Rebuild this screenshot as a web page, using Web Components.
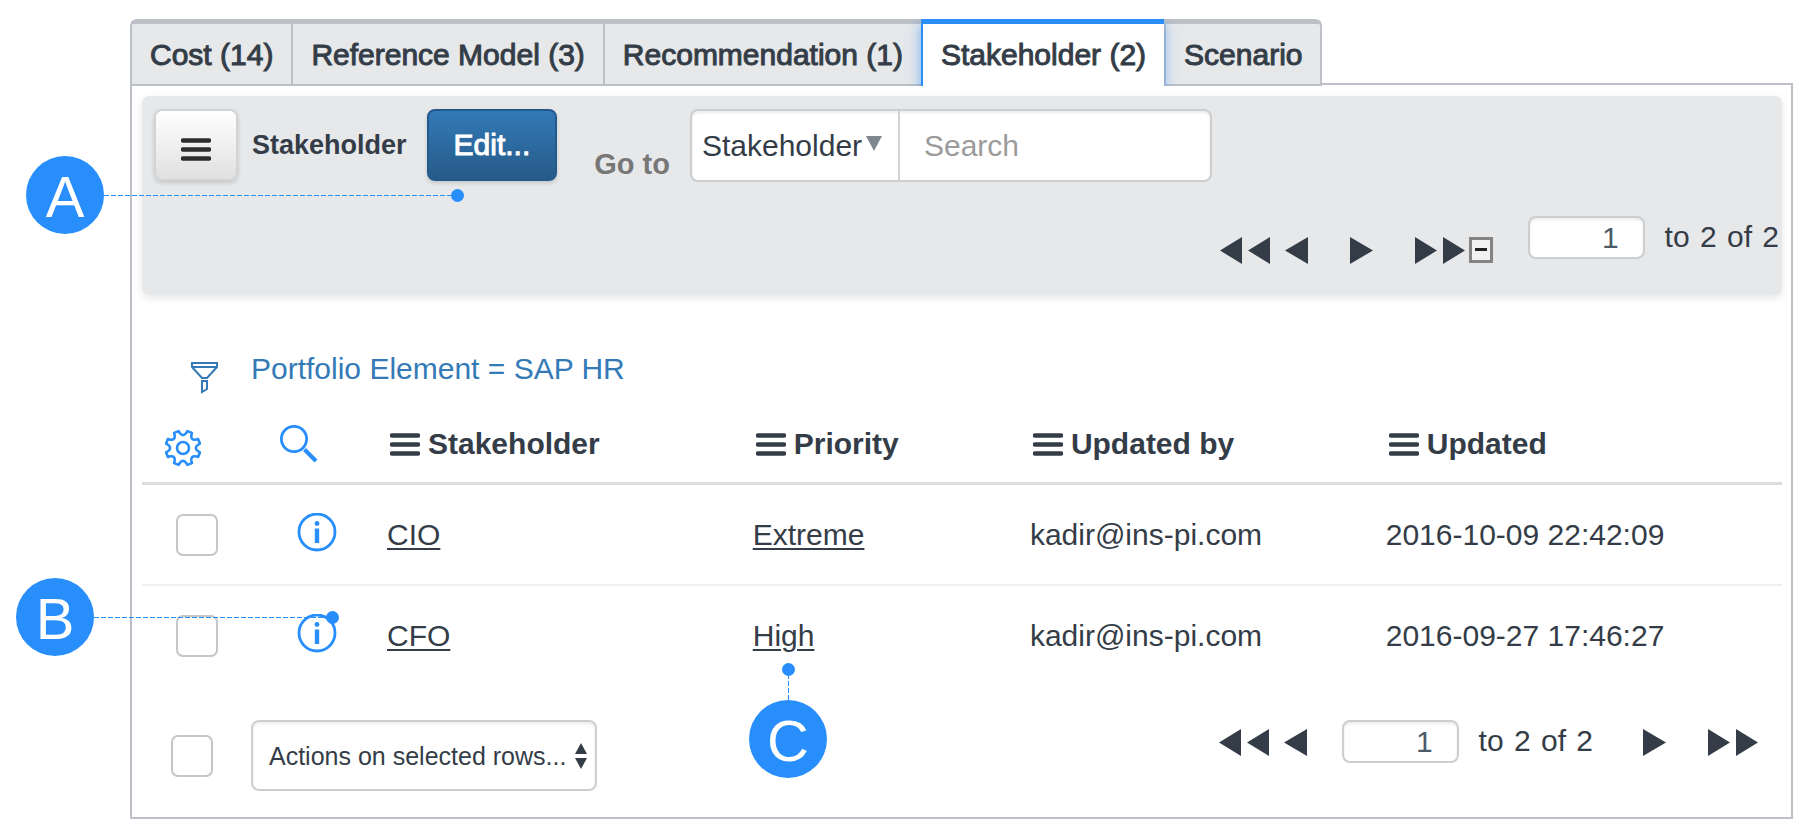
<!DOCTYPE html>
<html lang="en">
<head>
<meta charset="utf-8">
<title>Stakeholder</title>
<style>
  body {
    margin: 0;
    background: #fff;
    color: #343d47;
    font: 30px/36px "Liberation Sans", Arial, sans-serif;
    --accent: #278efc;
    --link: #337ab7;
    --line: #bdc0c6;
    --grey: #e6e8ea;
  }
</style>
</head>
<body>
<portfolio-page></portfolio-page>

<script>
const define = (name, html, setup = () => {}) => {
  const template = document.createElement('template');
  template.innerHTML = html;
  customElements.define(name, class extends HTMLElement {
    constructor() {
      super();
      this.attachShadow({ mode: 'open' });
      this.shadowRoot.append(template.content.cloneNode(true));
    }

    connectedCallback() {
      setup(this, this.shadowRoot);
    }
  });
};

const columns = ['Stakeholder', 'Priority', 'Updated by', 'Updated'];
const records = [
  ['CIO', 'Extreme', 'kadir@ins-pi.com', '2016-10-09 22:42:09'],
  ['CFO', 'High', 'kadir@ins-pi.com', '2016-09-27 17:46:27'],
];

// outline with eight teeth, joined by curved valleys
const gear = (c, tip, root) => {
  const at = (deg, r) => {
    const a = deg * Math.PI / 180;
    return `${(c + r * Math.cos(a)).toFixed(1)} ${(c + r * Math.sin(a)).toFixed(1)}`;
  };
  let d = '';
  for (let i = 0; i < 8; i++) {
    const mid = i * 45 + 22.5;
    d += `${i ? 'L' : 'M'}${at(mid - 8, tip)}L${at(mid + 8, tip)}L${at(mid + 11, root + 2)}`;
    d += `Q${at(mid + 22.5, root - 2)} ${at(mid + 34, root + 2)}`;
  }
  return `${d}Z`;
};

const shapes = {
  bars: [30, 23, '<path d="M2 2.5h26M2 11.5h26M2 20.5h26" stroke="currentColor" stroke-width="4.6" stroke-linecap="round"/>'],
  gear: [38, 38, `<g fill="none" stroke="currentColor" stroke-width="2.6" stroke-linejoin="round"><path d="${gear(19, 17.5, 13)}"/><circle cx="19" cy="19" r="6"/></g>`],
  search: [38, 40, '<g fill="none" stroke="currentColor"><circle cx="14" cy="16" r="12.6" stroke-width="2.8"/><path d="M24.5 26.5L36 38" stroke-width="4"/></g>'],
  info: [40, 40, '<circle cx="20" cy="19" r="18" fill="none" stroke="currentColor" stroke-width="2.8"/><circle cx="20" cy="10.5" r="2.4" fill="currentColor"/><path d="M20 15.500v14.500" stroke="currentColor" stroke-width="4.4"/>'],
  funnel: [27, 32, '<g fill="none" stroke="currentColor" stroke-width="2"><path d="M1 1h25v4L16 16h-5L1 5zM1 5h25"/><path d="M11 19h5v8l-5 3z"/></g>'],
  single: [23, 27, '<path d="M0 13.5L23 0v27z" fill="currentColor"/>'],
  double: [50, 27, '<path d="M0 13.5L22 0v27zM28 13.5L50 0v27z" fill="currentColor"/>'],
  collapse: [24, 26, '<rect x="1.500" y="1.500" width="21" height="23" fill="#f2f2f2" stroke="#848484" stroke-width="3"/><path d="M6 12.500h12" stroke="#222" stroke-width="3"/>'],
  updown: [12, 26, '<path d="M6 0l6 11H0zM6 26L0 15h12z" fill="currentColor"/>'],
};

define('ui-icon', `
<style>
  :host { display: inline-block; }
  :host([flip]) { transform: rotate(180deg); }
  svg { display: block; }
</style>
`, (host, root) => {
  const [width, height, body] = shapes[host.getAttribute('name')];
  root.innerHTML += `<svg width="${width}" height="${height}" viewBox="0 0 ${width} ${height}" aria-hidden="true">${body}</svg>`;
});

define('icon-button', `
<style>
  :host { display: block; flex: none; }
  button {
    display: block;
    padding: 0;
    border: 0;
    background: none;
    color: inherit;
    cursor: pointer;
  }
</style>
<button type="button"><slot></slot></button>
`, (host, root) => {
  root.querySelector('button').setAttribute('aria-label', host.getAttribute('label'));
});

define('push-button', `
<style>
  :host { display: block; flex: none; }
  button {
    display: flex;
    align-items: center;
    justify-content: center;
    box-sizing: border-box;
    height: 72px;
    padding: 0 25px;
    border: 2px solid #d2d3d4;
    border-radius: 8px;
    background: linear-gradient(#fff, #e0e0e0);
    box-shadow: 0 2px 4px rgba(0, 0, 0, .15);
    color: #2d2d2d;
    font: inherit;
  }
  ::slotted(ui-icon) { padding-top: 8px; }
  :host([primary]) button {
    border-color: #245a8b;
    background: linear-gradient(#337ab7, #265a88);
    color: #fff;
    -webkit-text-stroke: 1px #fff;
  }
</style>
<button type="button"><slot></slot></button>
`, (host, root) => {
  if (host.hasAttribute('label')) {
    root.querySelector('button').setAttribute('aria-label', host.getAttribute('label'));
  }
});

define('tick-box', `
<style>
  :host { display: block; flex: none; }
  input {
    display: block;
    appearance: none;
    box-sizing: border-box;
    width: 42px;
    height: 42px;
    margin: 0;
    border: 2px solid #c4c6ca;
    border-radius: 7px;
    background: #fff;
  }
  input:checked { background: var(--accent); }
</style>
<input type="checkbox">
`, (host, root) => {
  root.querySelector('input').setAttribute('aria-label', host.getAttribute('label'));
});

define('row-range', `
<style>
  :host { display: flex; gap: 20px; line-height: 42px; white-space: nowrap; }
  input {
    box-sizing: border-box;
    width: 117px;
    height: 43px;
    padding: 0 24px;
    border: 2px solid #ccced0;
    border-radius: 8px;
    background: #fff;
    box-shadow: inset 0 2px 3px rgba(0, 0, 0, .08);
    color: #4d5b69;
    font: inherit;
    text-align: right;
  }
  span { margin: 0 2px; }
  span:last-child { margin-right: 0; }
</style>
<input type="text" value="1" aria-label="First row">
<div>to <span>2</span> of <span>2</span></div>
`);

define('tab-strip', `
<style>
  :host {
    display: flex;
    position: relative;
    overflow: hidden;
    width: fit-content;
    border-radius: 6px 6px 0 0;
  }
  ::slotted(a) {
    box-sizing: border-box;
    height: 67px;
    padding: 13px 18px 0;
    border: solid var(--line);
    border-width: 5px 0 2px 2px;
    background: var(--grey);
    color: inherit;
    text-decoration: none;
    white-space: nowrap;
    -webkit-text-stroke: 1px currentColor;
  }
  ::slotted(a:last-child) { border-right-width: 2px; border-top-right-radius: 6px; }
  ::slotted(a:first-child) { border-top-left-radius: 6px; }
  ::slotted(a[aria-current]) {
    z-index: 1;
    border-color: var(--accent);
    border-bottom: 0;
    background: #fff;
    box-shadow: 0 5px 12px rgba(39, 142, 252, .6);
  }
</style>
<slot></slot>
`);

define('search-group', `
<style>
  :host {
    display: flex;
    flex: 0 1 522px;
    min-width: 0;
    box-sizing: border-box;
    height: 73px;
    border: 2px solid #ccced0;
    border-radius: 8px;
    background: #fff;
    box-shadow: inset 0 2px 3px rgba(0, 0, 0, .08);
  }
  label { display: grid; flex: none; }
  select, svg { grid-area: 1 / 1; }
  select, input {
    box-sizing: border-box;
    border: 0;
    background: none;
    color: inherit;
    font: inherit;
  }
  select {
    appearance: none;
    width: 208px;
    padding: 0 10px;
    border-right: 2px solid #d2d3d5;
  }
  svg { justify-self: end; margin: 25px 18px 0 0; pointer-events: none; }
  input { flex: 1; min-width: 0; padding: 0 24px; }
  input::placeholder { color: #9b9b9b; }
</style>
<label>
  <select aria-label="Search field"><option>Stakeholder</option></select>
  <svg width="16" height="15" viewBox="0 0 16 15" aria-hidden="true"><path d="M0 0h16L8 15z" fill="#7f8790"/></svg>
</label>
<input type="text" placeholder="Search" aria-label="Search">
`);

define('list-toolbar', `
<style>
  :host {
    display: block;
    box-sizing: border-box;
    padding: 13px 3px 28px 12px;
    border-radius: 7px;
    background: var(--grey);
    box-shadow: 0 3px 8px rgba(0, 0, 0, .1);
  }
  .main, .pager { display: flex; align-items: flex-start; }
  h2 {
    margin: 0 20px 0 14px;
    font-size: 27px;
    line-height: 73px;
  }
  .goto {
    align-self: flex-end;
    margin: 0 20px 0 37px;
    color: #777;
    font-size: 29px;
    font-weight: bold;
  }
  .pager { justify-content: flex-end; margin-top: 34px; }
  .arrows { display: flex; gap: 42px; padding-top: 21px; }
  .back { display: flex; gap: 15px; }
  .end { display: flex; gap: 4px; margin-right: 35px; }
</style>
<div class="main">
  <push-button label="List menu"><ui-icon name="bars"></ui-icon></push-button>
  <h2>Stakeholder</h2>
  <push-button primary>Edit...</push-button>
  <span class="goto">Go to</span>
  <search-group></search-group>
</div>
<div class="pager">
  <div class="arrows">
    <div class="back">
      <icon-button label="First page"><ui-icon name="double"></ui-icon></icon-button>
      <icon-button label="Previous page"><ui-icon name="single"></ui-icon></icon-button>
    </div>
    <icon-button label="Next page"><ui-icon name="single" flip></ui-icon></icon-button>
    <div class="end">
      <icon-button label="Last page"><ui-icon name="double" flip></ui-icon></icon-button>
      <icon-button label="Collapse list"><ui-icon name="collapse"></ui-icon></icon-button>
    </div>
  </div>
  <row-range></row-range>
</div>
`);

define('filter-trail', `
<style>
  :host {
    display: flex;
    gap: 33px;
    padding: 56px 0 0 49px;
    color: var(--link);
  }
  icon-button { padding-top: 11px; }
  a { color: inherit; text-decoration: none; }
</style>
<icon-button label="Edit filter"><ui-icon name="funnel"></ui-icon></icon-button>
<a href="#filter">Portfolio Element = SAP HR</a>
`);

define('record-table', `
<style>
  :host { display: block; }
  table { width: 100%; border-collapse: collapse; table-layout: fixed; }
  th {
    padding: 29px 0 20px 3px;
    border-bottom: 3px solid #dedede;
    text-align: left;
    vertical-align: bottom;
    white-space: nowrap;
  }
  th.tool { padding: 0 0 12px 22px; color: var(--accent); }
  th.tool + th.tool { padding: 0 0 16px 29px; }
  .check { width: 109px; }
  .info { width: 136px; }
  .c0 { width: 22.3%; }
  .c1 { width: 16.9%; }
  .c2 { width: 21.7%; }
  .heading { display: flex; align-items: center; gap: 8px; }
  td { height: 99px; padding: 0; white-space: nowrap; }
  tbody tr + tr td { border-top: 2px solid #efefef; }
  td tick-box { padding-left: 34px; }
  td icon-button { padding-left: 46px; color: var(--accent); }
  td a { color: inherit; text-decoration: underline 2px; text-underline-offset: 3px; }
</style>
<table>
  <colgroup>
    <col class="check"><col class="info"><col class="c0"><col class="c1"><col class="c2"><col>
  </colgroup>
  <thead><tr>
    <th class="tool"><icon-button label="Personalize list"><ui-icon name="gear"></ui-icon></icon-button></th>
    <th class="tool"><icon-button label="Show search row"><ui-icon name="search"></ui-icon></icon-button></th>
  </tr></thead>
  <tbody></tbody>
</table>
`, (host, root) => {
  root.querySelector('thead tr').insertAdjacentHTML('beforeend', columns.map(name =>
    `<th><div class="heading"><ui-icon name="bars"></ui-icon>${name}</div></th>`).join(''));
  root.querySelector('tbody').innerHTML = records.map(([name, priority, user, date]) => `
    <tr>
      <td><tick-box label="Select ${name}"></tick-box></td>
      <td><icon-button label="Preview ${name}"><ui-icon name="info"></ui-icon></icon-button></td>
      <td><a href="#${name}">${name}</a></td>
      <td><a href="#${priority}">${priority}</a></td>
      <td>${user}</td>
      <td>${date}</td>
    </tr>`).join('');
});

define('list-footer', `
<style>
  :host {
    display: flex;
    align-items: flex-start;
    padding: 35px 24px 26px 29px;
  }
  tick-box { padding-top: 15px; }
  label { display: grid; margin-left: 38px; }
  select, ui-icon { grid-area: 1 / 1; }
  select {
    appearance: none;
    box-sizing: border-box;
    width: 346px;
    height: 71px;
    padding: 0 16px;
    border: 2px solid #ccced0;
    border-radius: 8px;
    background: #fff;
    box-shadow: inset 0 2px 3px rgba(0, 0, 0, .08);
    color: inherit;
    font: inherit;
    font-size: 25px;
  }
  ui-icon { pointer-events: none; }
  label ui-icon { place-self: center end; margin-right: 10px; }
  row-range { margin: 0 50px 0 35px; }
  .back { display: flex; gap: 15px; margin-left: auto; padding-top: 9px; }
  .forward { display: flex; gap: 42px; padding-top: 9px; }
</style>
<tick-box label="Select all rows"></tick-box>
<label>
  <select aria-label="Actions"><option>Actions on selected rows...</option></select>
  <ui-icon name="updown"></ui-icon>
</label>
<div class="back">
  <icon-button label="First page"><ui-icon name="double"></ui-icon></icon-button>
  <icon-button label="Previous page"><ui-icon name="single"></ui-icon></icon-button>
</div>
<row-range></row-range>
<div class="forward">
  <icon-button label="Next page"><ui-icon name="single" flip></ui-icon></icon-button>
  <icon-button label="Last page"><ui-icon name="double" flip></ui-icon></icon-button>
</div>
`);

// Lettered badge with a dashed leader that ends in a dot
define('callout-pin', `
<style>
  :host {
    display: flex;
    position: absolute;
    z-index: 2;
    align-items: center;
    pointer-events: none;
    --run: to right;
  }
  :host([up]) { flex-direction: column-reverse; --run: to top; }
  .badge {
    flex: none;
    width: 78px;
    height: 78px;
    border-radius: 50%;
    background: var(--accent);
    color: #fff;
    font-size: 58px;
    line-height: 82px;
    text-align: center;
  }
  .leader {
    flex: 1;
    min-width: 1px;
    min-height: 1px;
    background: repeating-linear-gradient(var(--run), var(--accent) 0 5px, transparent 5px 7px);
  }
  .dot {
    flex: none;
    width: 13px;
    height: 13px;
    border-radius: 50%;
    background: var(--accent);
  }
</style>
<div class="badge"><slot></slot></div>
<div class="leader"></div>
<div class="dot"></div>
`);

define('portfolio-page', `
<style>
  :host {
    display: block;
    position: relative;
    padding: 19px 14px 10px 130px;
  }
  main {
    margin-top: -3px;
    padding: 11px 9px 0 10px;
    border: 2px solid var(--line);
  }
  .a { left: 26px; top: 156px; width: 438px; }
  .b { left: 16px; top: 578px; width: 323px; }
  .c { left: 749px; top: 663px; height: 115px; }
</style>
<tab-strip>
  <a href="#cost">Cost (14)</a>
  <a href="#reference-model">Reference Model (3)</a>
  <a href="#recommendation">Recommendation (1)</a>
  <a href="#stakeholder" aria-current="page">Stakeholder (2)</a>
  <a href="#scenario">Scenario</a>
</tab-strip>
<main>
  <list-toolbar></list-toolbar>
  <filter-trail></filter-trail>
  <record-table></record-table>
  <list-footer></list-footer>
</main>
<callout-pin class="a">A</callout-pin>
<callout-pin class="b">B</callout-pin>
<callout-pin class="c" up>C</callout-pin>
`);
</script>
</body>
</html>
